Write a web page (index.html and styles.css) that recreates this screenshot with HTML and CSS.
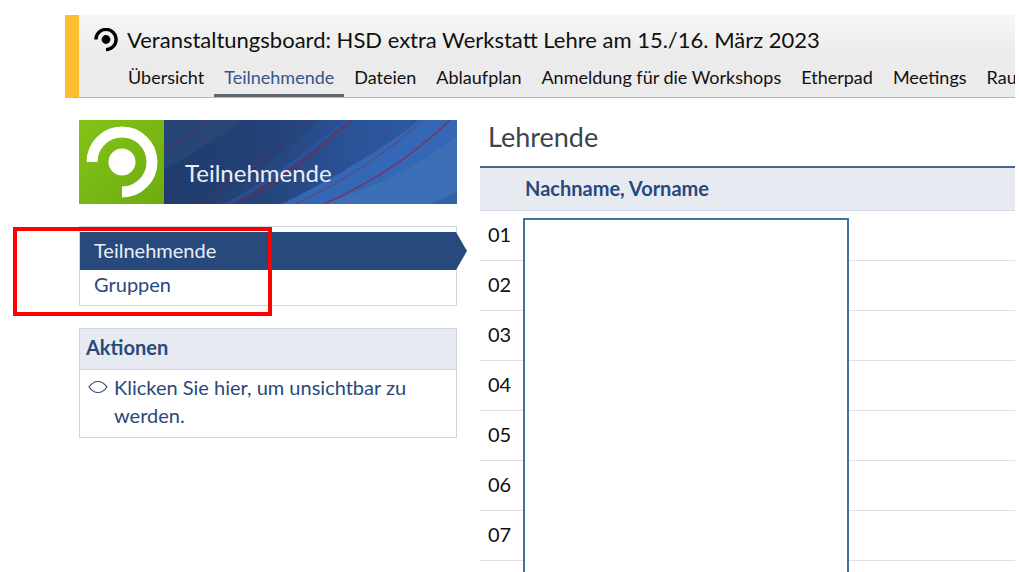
FILE: index.html
```html
<!DOCTYPE html>
<html lang="de">
<head>
    <meta charset="UTF-8">
    <meta name="viewport" content="width=device-width, initial-scale=1.0">
    <title>Teilnehmende - Veranstaltungsboard</title>
    <link rel="stylesheet" href="styles.css">
</head>
<body>
    <header class="board-header">
        <div class="board-title">
            <svg class="board-logo" viewBox="0 0 24 24" aria-hidden="true">
                <path d="M1.9 11.5A10.1 10.1 0 1 1 12 21.6" fill="none" stroke="#000" stroke-width="3.4"/>
                <circle cx="12" cy="11.5" r="4.4"/>
            </svg>
            <h1>Veranstaltungsboard: HSD extra Werkstatt Lehre am 15./16. März 2023</h1>
        </div>
        <nav class="tabs">
            <a href="#">Übersicht</a>
            <a href="#" class="active">Teilnehmende</a>
            <a href="#">Dateien</a>
            <a href="#">Ablaufplan</a>
            <a href="#">Anmeldung für die Workshops</a>
            <a href="#">Etherpad</a>
            <a href="#">Meetings</a>
            <a href="#">Rau</a>
        </nav>
    </header>

    <div class="layout">
        <aside class="sidebar">
            <div class="banner">
                <svg class="banner-logo" viewBox="0 0 85 84" aria-hidden="true">
                    <defs>
                        <linearGradient id="green" x1="0" y1="0" x2="1" y2="1">
                            <stop offset="0" stop-color="#84c318"/>
                            <stop offset="1" stop-color="#6eac10"/>
                        </linearGradient>
                    </defs>
                    <rect width="85" height="84" fill="url(#green)"/>
                    <path d="M13 42A30 30 0 1 1 43 72" fill="none" stroke="#fff" stroke-width="11"/>
                    <circle cx="43" cy="42" r="13.5" fill="#fff"/>
                </svg>
                <div class="banner-title">
                    <svg class="banner-art" viewBox="0 0 293 84" preserveAspectRatio="none" aria-hidden="true">
                        <defs>
                            <linearGradient id="blue" x1="0" y1="0" x2="1" y2="0">
                                <stop offset="0" stop-color="#213c6c"/>
                                <stop offset="0.35" stop-color="#25457c"/>
                                <stop offset="0.7" stop-color="#2b559b"/>
                                <stop offset="1" stop-color="#2d5ca6"/>
                            </linearGradient>
                        </defs>
                        <rect width="293" height="84" fill="url(#blue)"/>
                        <path d="M0 0H80Q40 28 0 50Z" fill="#2b4877" opacity="0.7"/>
                        <path d="M80 0H155Q100 50 48 84H0V50Q40 28 80 0Z" fill="#203d6e" opacity="0.3"/>
                        <path d="M60 84Q125 48 180 0H184Q130 50 68 84Z" fill="#2e57a3" opacity="0.6"/>
                        <path d="M118 84Q195 46 256 0H293V84Z" fill="#3467b5"/>
                        <path d="M160 84Q235 60 293 17V84Z" fill="#3e72b6" opacity="0.8"/>
                        <path d="M264 84Q280 79 293 71V84Z" fill="#2f609f" opacity="0.7"/>
                        <g fill="none" stroke="#9b1e3c" stroke-width="1">
                            <path d="M0 30Q24 16 41 0" opacity="0.6"/>
                            <path d="M0 11L17 0" opacity="0.4"/>
                            <path d="M36 84Q95 48 143 0" opacity="0.5"/>
                            <path d="M72 84Q135 50 187 0" stroke-width="1.2" opacity="0.8"/>
                            <path d="M132 84Q205 50 259 0" opacity="0.6"/>
                            <path d="M160 84Q232 52 286 0" stroke-width="1.2" opacity="0.8"/>
                        </g>
                    </svg>
                    <span>Teilnehmende</span>
                </div>
            </div>

            <nav class="side-nav">
                <a href="#" class="active">Teilnehmende</a>
                <a href="#">Gruppen</a>
            </nav>

            <section class="actions">
                <h2>Aktionen</h2>
                <a href="#">
                    <svg viewBox="0 0 20 14" aria-hidden="true">
                        <path d="M1 7C4 2.8 7 1.5 10 1.5S16 2.8 19 7C16 11.2 13 12.5 10 12.5S4 11.2 1 7Z" fill="none" stroke="#28497c" stroke-width="1.2"/>
                    </svg>
                    <span>Klicken Sie hier, um unsichtbar zu werden.</span>
                </a>
            </section>
        </aside>

        <main class="content">
            <table>
                <caption>Lehrende</caption>
                <thead>
                    <tr><th class="number"></th><th>Nachname, Vorname</th></tr>
                </thead>
                <tbody>
                    <tr><td>01</td><td></td></tr>
                    <tr><td>02</td><td></td></tr>
                    <tr><td>03</td><td></td></tr>
                    <tr><td>04</td><td></td></tr>
                    <tr><td>05</td><td></td></tr>
                    <tr><td>06</td><td></td></tr>
                    <tr><td>07</td><td></td></tr>
                </tbody>
            </table>
            <div class="name-cover"></div>
        </main>
    </div>

    <div class="highlight"></div>
</body>
</html>
```
FILE: styles.css
```css
:root {
    --brand: #28497c;
    --brand-light: #e7ebf1;
    --border: #d0d7e3;
    --text: #101010;
}

* {
    margin: 0;
    padding: 0;
    box-sizing: border-box;
}

body {
    position: relative;
    display: flex;
    flex-direction: column;
    height: 100vh;
    overflow: hidden;
    padding: 15px 4px 0 65px;
    background-color: #fff;
    color: var(--text);
    font-family: Lato, sans-serif;
    font-size: 20px;
    line-height: 28px;
}

a {
    color: var(--brand);
    text-decoration: none;
}

.board-header {
    flex: none;
    overflow: hidden;
    border-left: 14px solid #ffbd33;
    border-bottom: 1px solid #b5b7ba;
    background: linear-gradient(#f5f7f6, #ebebeb 50%, #ebebeb);
}

.board-title {
    display: flex;
    align-items: center;
    gap: 9px;
    padding: 11px 0 0 15px;
}

.board-title h1 {
    font-size: 22px;
    font-weight: 400;
    white-space: nowrap;
}

.board-logo {
    width: 24px;
    height: 24px;
}

.tabs {
    display: flex;
    padding-left: 39px;
}

.tabs a {
    padding: 9px 10px 3px;
    border-bottom: 3px solid transparent;
    color: var(--text);
    font-size: 18px;
    white-space: nowrap;
}

.tabs a.active {
    border-bottom-color: #5f6672;
    color: #34558c;
}

.layout {
    flex: 1;
    min-height: 0;
    display: grid;
    grid-template-columns: 378px 1fr;
    grid-template-rows: 100%;
    gap: 23px;
    padding-left: 14px;
}

.sidebar {
    display: flex;
    flex-direction: column;
    gap: 22px;
    padding-top: 22px;
}

.banner {
    display: flex;
    height: 84px;
}

.banner-logo {
    width: 85px;
    height: 84px;
}

.banner-title {
    flex: 1;
    position: relative;
    padding: 39px 0 0 21px;
    color: #e9eef6;
    font-size: 24px;
}

.banner-title span {
    position: relative;
}

.banner-art {
    position: absolute;
    inset: 0;
    width: 100%;
    height: 100%;
}

.side-nav {
    border: 1px solid var(--border);
    padding: 5px 0;
}

.side-nav a {
    display: block;
    padding: 0 14px 2px;
}

.side-nav a.active {
    position: relative;
    padding: 4px 14px 6px;
    background-color: var(--brand);
    color: #e9eef6;
}

.side-nav a.active::after {
    content: "";
    position: absolute;
    top: 0;
    left: 100%;
    width: 11px;
    height: 100%;
    background-color: var(--brand);
    clip-path: polygon(0 0, 100% 50%, 0 100%);
}

.actions {
    border: 1px solid var(--border);
}

.actions h2 {
    padding: 4px 6px 8px;
    border-bottom: 1px solid var(--border);
    background-color: var(--brand-light);
    color: var(--brand);
    font-size: 20px;
    font-weight: 700;
}

.actions a {
    display: flex;
    gap: 6px;
    padding: 3px 8px 8px;
}

.actions svg {
    flex: none;
    width: 20px;
    height: 14px;
    margin-top: 7px;
}

.content {
    position: relative;
    min-width: 0;
    overflow: hidden;
}

table {
    width: 100%;
    border-collapse: separate;
    border-spacing: 0;
}

caption {
    padding: 25px 8px 15px;
    color: #3c454e;
    font-size: 27px;
    text-align: left;
}

th {
    height: 45px;
    padding-bottom: 2px;
    border-top: 2px solid #4c6690;
    border-bottom: 1px solid var(--border);
    background-color: var(--brand-light);
    color: var(--brand);
    text-align: left;
}

th.number {
    width: 45px;
}

td {
    height: 50px;
    padding: 0 0 4px 8px;
    border-bottom: 1px solid #dedfe1;
}

/* hides the names column */
.name-cover {
    position: absolute;
    top: 120px;
    left: 43px;
    width: 326px;
    height: 100%;
    border: 2px solid #41719c;
    background-color: #fff;
}

.highlight {
    position: absolute;
    top: 227px;
    left: 13px;
    width: 259px;
    height: 89px;
    border: 4px solid #f00;
}
```
